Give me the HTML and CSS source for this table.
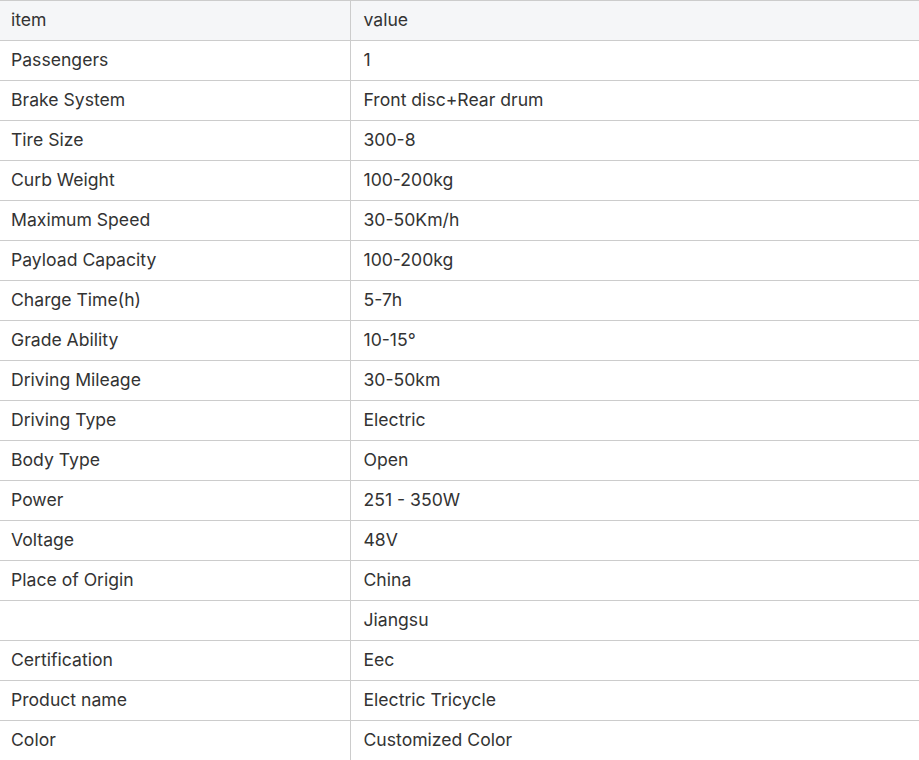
FILE: index.html
```html
<!DOCTYPE html>
<html>
<head>
<meta charset="utf-8">
<link rel="stylesheet" href="styles.css">
</head>
<body>
<table class="spec">
<thead>
<tr><th class="c1">item</th><th class="c2">value</th></tr>
</thead>
<tbody>
<tr><td>Passengers</td><td>1</td></tr>
<tr><td>Brake System</td><td>Front disc+Rear drum</td></tr>
<tr><td>Tire Size</td><td>300-8</td></tr>
<tr><td>Curb Weight</td><td>100-200kg</td></tr>
<tr><td>Maximum Speed</td><td>30-50Km/h</td></tr>
<tr><td>Payload Capacity</td><td>100-200kg</td></tr>
<tr><td>Charge Time(h)</td><td>5-7h</td></tr>
<tr><td>Grade Ability</td><td>10-15°</td></tr>
<tr><td>Driving Mileage</td><td>30-50km</td></tr>
<tr><td>Driving Type</td><td>Electric</td></tr>
<tr><td>Body Type</td><td>Open</td></tr>
<tr><td>Power</td><td>251 - 350W</td></tr>
<tr><td>Voltage</td><td>48V</td></tr>
<tr><td>Place of Origin</td><td>China</td></tr>
<tr><td></td><td>Jiangsu</td></tr>
<tr><td>Certification</td><td>Eec</td></tr>
<tr><td>Product name</td><td>Electric Tricycle</td></tr>
<tr><td>Color</td><td>Customized Color</td></tr>
</tbody>
</table>
</body>
</html>
```
FILE: styles.css
```css
html, body {
  margin: 0;
  padding: 0;
  background: #ffffff;
}
.spec {
  width: 919px;
  border-collapse: collapse;
  table-layout: fixed;
  font-family: Inter, "Noto Sans", sans-serif;
  font-size: 17.6px;
  color: #333333;
}
.spec th, .spec td {
  height: 40px;
  padding: 0 11px 2px;
  text-align: left;
  font-weight: 400;
  border-top: 1px solid #cccccc;
  border-bottom: 1px solid #cccccc;
  vertical-align: middle;
  box-sizing: border-box;
}
.spec th {
  background: #f5f6f8;
}
.spec .c1 {
  width: 350px;
}
.spec th + th, .spec td + td {
  border-left: 1px solid #cccccc;
  padding-left: 13px;
}
```
